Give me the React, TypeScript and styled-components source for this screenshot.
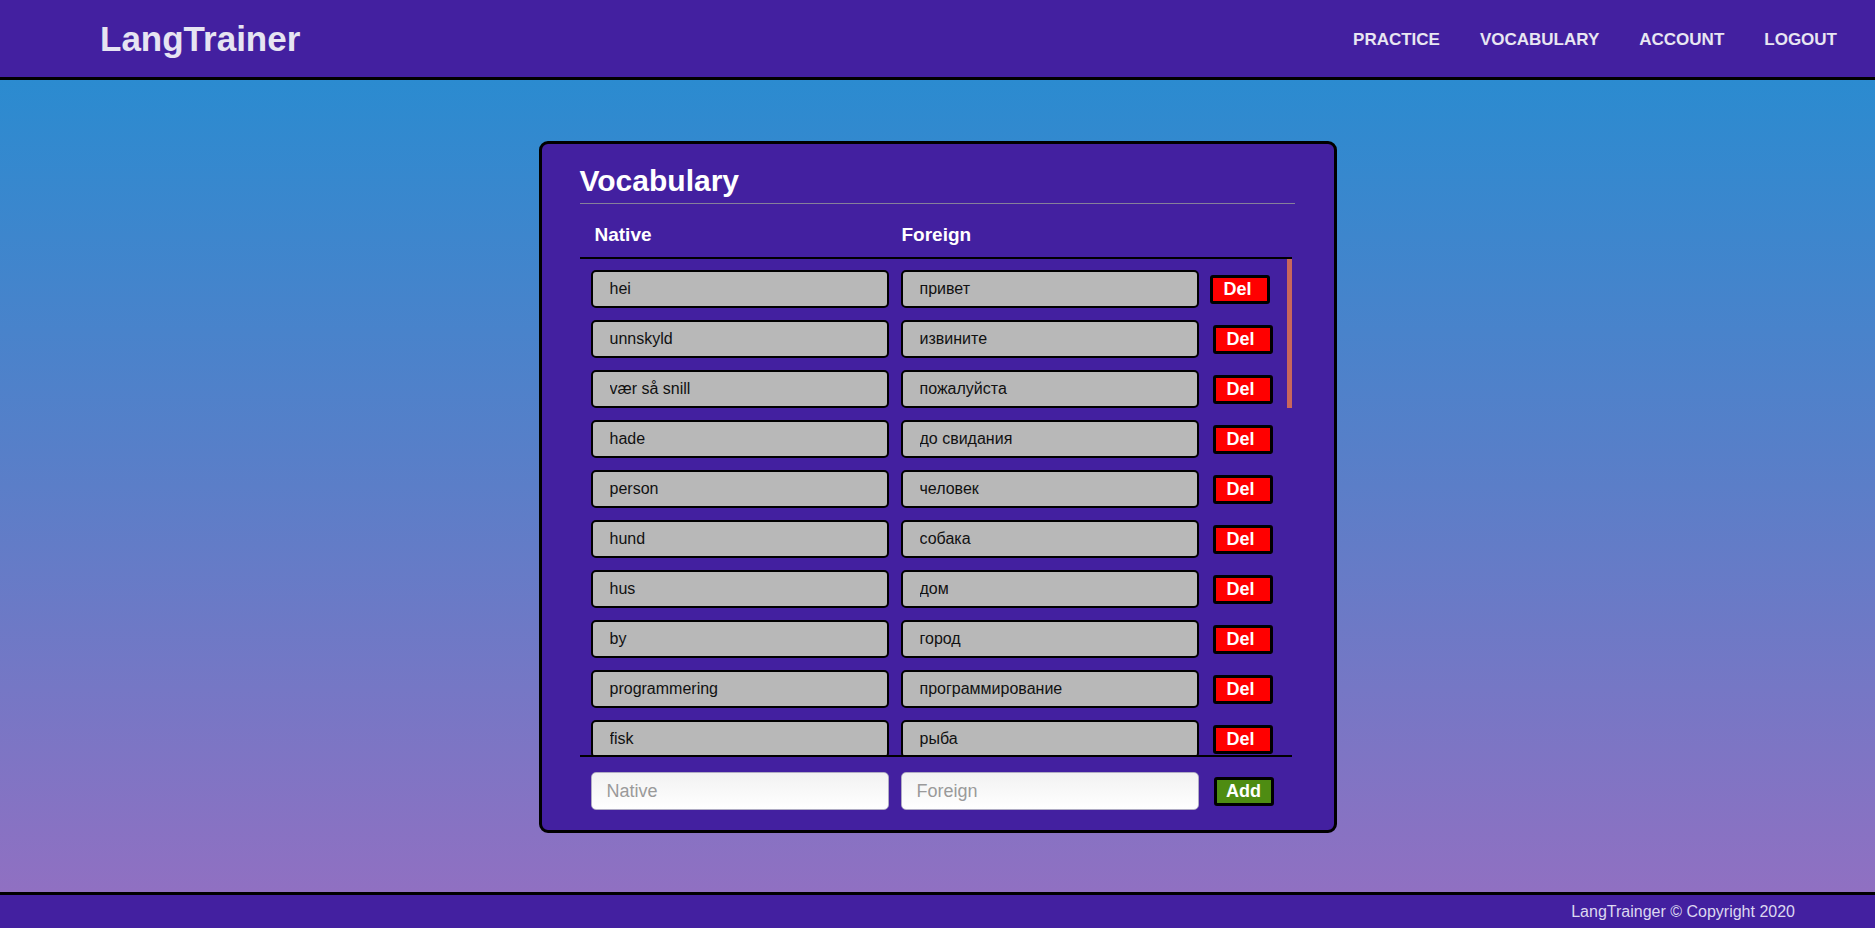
import React from "react";
import styled, { createGlobalStyle } from "styled-components";

const GlobalStyle = createGlobalStyle`
  html, body {
    margin: 0;
    padding: 0;
  }
  body {
    font-family: "Liberation Sans", Arial, Helvetica, sans-serif;
  }
  * {
    box-sizing: border-box;
  }
`;

const PURPLE = "#4320a0";
const LIST_VIEW = 496;
const ROW_H = 50;
const LIST_PAD = 5;

const Page = styled.div`
  min-height: 100vh;
  display: flex;
  flex-direction: column;
`;

const Header = styled.header`
  height: 80px;
  background: ${PURPLE};
  border-bottom: 3px solid #000;
  display: flex;
  align-items: center;
  justify-content: space-between;
  padding: 0 18px 0 100px;
`;

const Logo = styled.div`
  font-size: 35px;
  font-weight: 700;
  color: #e6e4f2;
  line-height: 40px;
`;

const Nav = styled.nav`
  display: flex;
  align-items: center;
`;

const NavLink = styled.a`
  padding: 0 20px;
  font-size: 17px;
  font-weight: 700;
  color: #e8e6f2;
  text-decoration: none;
  line-height: 20px;
  margin-top: 2px;
`;

const Main = styled.main`
  flex: 1;
  display: flex;
  align-items: center;
  justify-content: center;
  background: linear-gradient(to bottom, #2b8bd0 0%, #5b7ec8 50%, #9070c2 100%);
  padding-top: 2px;
`;

const Card = styled.section`
  width: 798px;
  background: ${PURPLE};
  border: 3px solid #000;
  border-radius: 9px;
  padding: 20px 39px 0 38px;
`;

const Title = styled.h2`
  margin: 0 0 5px;
  font-size: 30px;
  line-height: 34px;
  font-weight: 700;
  color: #ffffff;
`;

const Rule = styled.div`
  height: 1px;
  background: #86809a;
`;

const Table = styled.div`
  margin-right: 3px;
`;

const HeadRow = styled.div`
  display: flex;
  padding: 20px 0 11px 15px;
  border-bottom: 2px solid #000;
`;

const HeadCell = styled.div<{ $w?: number }>`
  width: ${(p) => (p.$w ? `${p.$w}px` : "auto")};
  font-size: 19px;
  line-height: 22px;
  font-weight: 700;
  color: #ffffff;
`;

const ListWrap = styled.div`
  position: relative;
  border-bottom: 2px solid #000;
`;

const List = styled.div`
  height: ${LIST_VIEW}px;
  padding-top: ${LIST_PAD}px;
  overflow-y: auto;
  scrollbar-width: none;

  &::-webkit-scrollbar {
    display: none;
  }
`;

const ScrollThumb = styled.div`
  position: absolute;
  top: 0;
  right: 0;
  width: 5px;
  background: #c8665c;
  pointer-events: none;
`;

const Row = styled.div`
  display: flex;
  align-items: center;
  height: ${ROW_H}px;
  padding-left: 11px;
  gap: 12px;
`;

const WordInput = styled.input`
  width: 298px;
  height: 38px;
  border: 2px solid #000;
  border-radius: 5px;
  background: #b8b8b8;
  padding: 0 17px;
  font-family: "Liberation Sans", Arial, sans-serif;
  font-size: 16px;
  color: #111;
  outline: none;
`;

const ActionButton = styled.button<{ $tone: "del" | "add"; $nudge?: boolean }>`
  width: 60px;
  height: 29px;
  margin-left: ${(p) => (p.$nudge ? -1 : p.$tone === "add" ? 3 : 2)}px;
  border: 3px solid #000;
  border-radius: 3px;
  background: ${(p) => (p.$tone === "del" ? "#ff0000" : "#4e8c12")};
  color: #ffffff;
  font-family: "Liberation Sans", Arial, sans-serif;
  font-size: 18px;
  font-weight: 700;
  line-height: 20px;
  padding: ${(p) => (p.$tone === "del" ? "0 4px 0 0" : "0")};
  cursor: pointer;
`;

const AddForm = styled.form`
  display: flex;
  align-items: center;
  gap: 12px;
  padding: 15px 0 20px 11px;
`;

const NewInput = styled.input`
  width: 298px;
  height: 38px;
  border: 1px solid #b0acc4;
  border-radius: 5px;
  background: linear-gradient(to bottom, #f2f2f2, #ffffff);
  padding: 0 15px;
  font-family: "Liberation Sans", Arial, sans-serif;
  font-size: 18px;
  color: #222;
  outline: none;

  &::placeholder {
    color: #9a9a9a;
  }
`;

const Footer = styled.footer`
  height: 36px;
  background: ${PURPLE};
  border-top: 3px solid #000;
  display: flex;
  align-items: center;
  justify-content: flex-end;
  padding: 0 80px 0 0;
  font-size: 16px;
  color: #dcd8f0;
`;

const words: [string, string][] = [
  ["hei", "привет"],
  ["unnskyld", "извините"],
  ["vær så snill", "пожалуйста"],
  ["hade", "до свидания"],
  ["person", "человек"],
  ["hund", "собака"],
  ["hus", "дом"],
  ["by", "город"],
  ["programmering", "программирование"],
  ["fisk", "рыба"],
  ["katt", "кошка"],
  ["bok", "книга"],
  ["vann", "вода"],
  ["mat", "еда"],
  ["bil", "машина"],
  ["skole", "школа"],
  ["venn", "друг"],
  ["familie", "семья"],
  ["mor", "мать"],
  ["far", "отец"],
  ["sol", "солнце"],
  ["måne", "луна"],
  ["tre", "дерево"],
  ["eple", "яблоко"],
  ["brød", "хлеб"],
  ["melk", "молоко"],
  ["kaffe", "кофе"],
  ["te", "чай"],
  ["dag", "день"],
  ["natt", "ночь"],
  ["år", "год"],
  ["tid", "время"],
  ["takk", "спасибо"],
];

export default function App() {
  const contentHeight = LIST_PAD + words.length * ROW_H;
  const thumbHeight = Math.round((LIST_VIEW * LIST_VIEW) / contentHeight);

  return (
    <>
      <GlobalStyle />
      <Page>
        <Header>
          <Logo>LangTrainer</Logo>
          <Nav>
            <NavLink href="#">PRACTICE</NavLink>
            <NavLink href="#">VOCABULARY</NavLink>
            <NavLink href="#">ACCOUNT</NavLink>
            <NavLink href="#">LOGOUT</NavLink>
          </Nav>
        </Header>
        <Main>
          <Card>
            <Title>Vocabulary</Title>
            <Rule />
            <Table>
              <HeadRow>
                <HeadCell $w={307}>Native</HeadCell>
                <HeadCell>Foreign</HeadCell>
              </HeadRow>
              <ListWrap>
                <List>
                  {words.map(([native, foreign], i) => (
                    <Row key={native}>
                      <WordInput defaultValue={native} />
                      <WordInput defaultValue={foreign} />
                      <ActionButton type="button" $tone="del" $nudge={i === 0}>
                        Del
                      </ActionButton>
                    </Row>
                  ))}
                </List>
                <ScrollThumb style={{ height: thumbHeight }} />
              </ListWrap>
            </Table>
            <AddForm onSubmit={(e) => e.preventDefault()}>
              <NewInput placeholder="Native" />
              <NewInput placeholder="Foreign" />
              <ActionButton type="submit" $tone="add">
                Add
              </ActionButton>
            </AddForm>
          </Card>
        </Main>
        <Footer>LangTrainger © Copyright 2020</Footer>
      </Page>
    </>
  );
}
